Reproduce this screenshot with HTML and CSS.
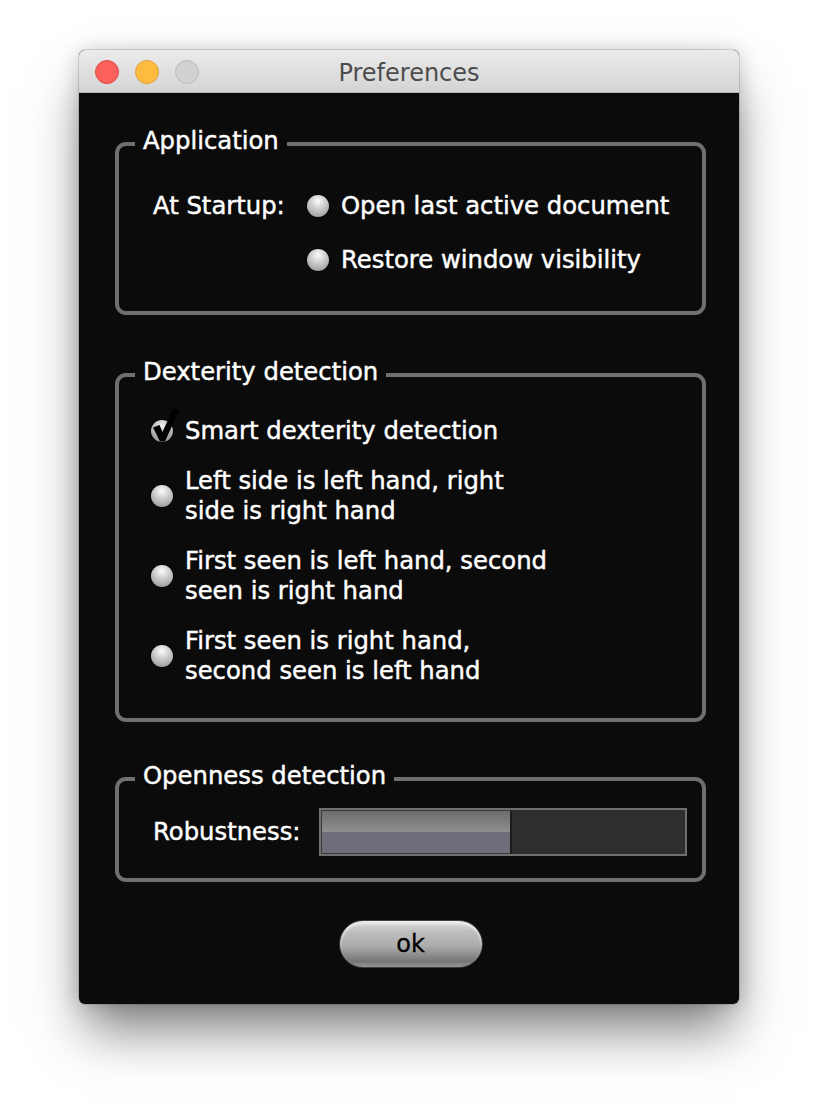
FILE: index.html
```html
<!DOCTYPE html>
<html lang="en">
<head>
    <meta charset="UTF-8">
    <title>Preferences</title>
    <link rel="stylesheet" href="styles.css">
</head>
<body>
    <div class="window">
        <div class="titlebar">
            <div class="lights">
                <span class="light light-close"></span>
                <span class="light light-min"></span>
                <span class="light light-zoom"></span>
            </div>
            <div class="title">Preferences</div>
            <div></div>
        </div>

        <div class="content">
            <fieldset class="group group-app">
                <legend>Application</legend>
                <div class="startup">
                    <span class="field-label">At Startup:</span>
                    <div class="options">
                        <label class="option"><span class="radio"></span>Open last active document</label>
                        <label class="option"><span class="radio"></span>Restore window visibility</label>
                    </div>
                </div>
            </fieldset>

            <fieldset class="group group-dexterity">
                <legend>Dexterity detection</legend>
                <div class="choice-list">
                    <label class="choice">
                        <span class="radio radio-checked">
                            <svg class="tick" viewBox="0 0 28 34" width="28" height="34">
                                <path d="M1 18.5 L7.5 16 L10.5 23 L21 0 L27 1.5 L13 32.5 L8 32.5 Z" fill="#000"/>
                            </svg>
                        </span>
                        <span>Smart dexterity detection</span>
                    </label>
                    <label class="choice">
                        <span class="radio"></span>
                        <span>Left side is left hand, right<br>side is right hand</span>
                    </label>
                    <label class="choice">
                        <span class="radio"></span>
                        <span>First seen is left hand, second<br>seen is right hand</span>
                    </label>
                    <label class="choice">
                        <span class="radio"></span>
                        <span>First seen is right hand,<br>second seen is left hand</span>
                    </label>
                </div>
            </fieldset>

            <fieldset class="group group-openness">
                <legend>Openness detection</legend>
                <div class="robustness">
                    <span class="field-label">Robustness:</span>
                    <div class="meter">
                        <div class="meter-fill" style="width: 52.5%"></div>
                    </div>
                </div>
            </fieldset>

            <div class="actions">
                <button class="ok-button">ok</button>
            </div>
        </div>
    </div>
</body>
</html>
```

FILE: styles.css
```css
body {
    margin: 0;
    padding: 50px 0 110px 79px;
    background-color: #fff;
    font-family: 'DejaVu Sans', Verdana, sans-serif;
}

.window {
    width: 660px;
    border-radius: 6px;
    overflow: hidden;
    background-color: #0b0b0b;
    box-shadow: 0 32px 50px -6px rgba(0, 0, 0, 0.5), 0 0 20px rgba(0, 0, 0, 0.18), 0 0 0 1px rgba(0, 0, 0, 0.12);
}

.titlebar {
    height: 43px;
    display: grid;
    grid-template-columns: 1fr auto 1fr;
    align-items: center;
    background: linear-gradient(to bottom, #ebebeb, #d4d4d4);
    border-bottom: 1px solid #b4b4b4;
    box-sizing: border-box;
}

.lights {
    display: flex;
    gap: 16px;
    padding-left: 16px;
    padding-top: 2px;
}

.light {
    width: 24px;
    height: 24px;
    border-radius: 50%;
    box-sizing: border-box;
}

.light-close {
    background-color: #fc605b;
    border: 1px solid #de4842;
}

.light-min {
    background-color: #fdbc40;
    border: 1px solid #dea032;
}

.light-zoom {
    background-color: #d1d1d1;
    border: 1px solid #bcbcbc;
}

.title {
    font-size: 24px;
    color: #4d4d4d;
    padding-top: 3px;
}

.content {
    padding: 0 33px 36px 36px;
    color: #fff;
    font-size: 24.3px;
    line-height: 30px;
    -webkit-text-stroke: 0.45px #fff;
}

.group {
    margin: 0;
    padding: 0 16px;
    border: 4px solid #6f6f6f;
    border-radius: 11px;
    min-inline-size: 0;
}

.group legend {
    padding: 0 8px 6px;
    line-height: 30px;
}

.group-app {
    margin-top: 33px;
    padding-top: 29px;
    padding-bottom: 36px;
}

.group-dexterity {
    margin-top: 42px;
    padding-top: 23px;
    padding-bottom: 32px;
}

.group-openness {
    margin-top: 39px;
    padding-top: 11px;
    padding-bottom: 22px;
}

.startup {
    display: grid;
    grid-template-columns: 154px auto;
    margin-left: 18px;
}

.options {
    display: flex;
    flex-direction: column;
    gap: 24px;
}

.option,
.choice {
    display: flex;
    align-items: center;
    gap: 12px;
}

.radio {
    position: relative;
    flex: none;
    width: 22px;
    height: 22px;
    border-radius: 50%;
    background: radial-gradient(circle at 50% 28%, #fdfdfd 0%, #d8d8d8 30%, #adadad 70%, #8a8a8a 100%);
    box-shadow: 0 0 0 1px rgba(0, 0, 0, 0.4);
}

.radio-checked {
    background: radial-gradient(circle at 50% 28%, #f0f0f0 0%, #c8c8c8 35%, #9c9c9c 75%, #7e7e7e 100%);
}

.tick {
    position: absolute;
    left: 1px;
    top: -11px;
}

.choice-list {
    display: flex;
    flex-direction: column;
    gap: 20px;
    margin-left: 16px;
}

.robustness {
    display: grid;
    grid-template-columns: 166px 368px;
    align-items: center;
    margin-left: 18px;
}

.meter {
    height: 48px;
    box-sizing: border-box;
    border: 2px solid #6f6f6f;
    background-color: #2f2f2f;
}

.meter-fill {
    height: 100%;
    box-sizing: border-box;
    background: linear-gradient(to bottom, #6c6c6c 0%, #8f8f8f 50%, #6e6e7b 50%, #6e6e7b 100%);
    border: 1px solid #3a3a3a;
    border-right: 2px solid #1c1c1c;
}

.actions {
    display: flex;
    justify-content: center;
    margin-top: 38px;
}

.ok-button {
    width: 144px;
    height: 48px;
    border-radius: 24px;
    border: 1px solid #3c3c3c;
    background: linear-gradient(to bottom, #dcdcdc 0%, #bfbfbf 22%, #ababab 55%, #767676 88%, #979797 100%);
    box-shadow: inset 0 3px 3px rgba(255, 255, 255, 0.55);
    font-family: 'DejaVu Sans', Verdana, sans-serif;
    font-size: 24px;
    color: #000;
    padding: 0;
    -webkit-text-stroke: 0.3px #000;
}
```
